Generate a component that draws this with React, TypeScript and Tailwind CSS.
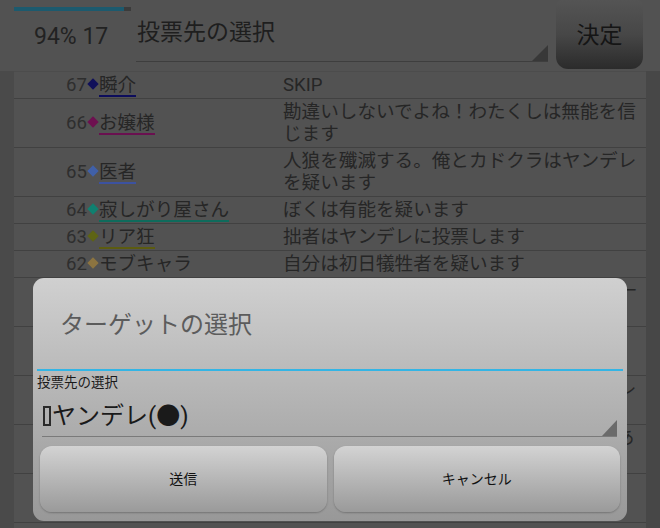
import React from "react";

const font = { fontFamily: "Roboto, 'Noto Sans CJK JP', sans-serif" };

type Row = { n: number; name: string; color: string | null; dia: string; text: string };

const rows: Row[] = [
  { n: 67, name: "瞬介", color: "#0d0d5c", dia: "#10105a", text: "SKIP" },
  { n: 66, name: "お嬢様", color: "#6a1050", dia: "#6e1050", text: "勘違いしないでよね！わたくしは無能を信じます" },
  { n: 65, name: "医者", color: "#3c52a0", dia: "#4060a8", text: "人狼を殲滅する。俺とカドクラはヤンデレを疑います" },
  { n: 64, name: "寂しがり屋さん", color: "#0f6b5c", dia: "#108070", text: "ぼくは有能を疑います" },
  { n: 63, name: "リア狂", color: "#5c5c10", dia: "#5e6414", text: "拙者はヤンデレに投票します" },
  { n: 62, name: "モブキャラ", color: null, dia: "#8c7440", text: "自分は初日犠牲者を疑います" },
  { n: 61, name: "カドクラ", color: "#5a2a10", dia: "#5a2a10", text: "医者とは意見が合わないがヤンデレには一票ー" },
  { n: 60, name: "ヤンデレ", color: "#601010", dia: "#601010", text: "みんなわたしのことを疑うのね。いいわ、わかったわ" },
  { n: 59, name: "無能", color: "#303060", dia: "#303060", text: "有能は怪しいと思いますがまずはヤンデレからです" },
  { n: 58, name: "有能", color: "#305030", dia: "#305030", text: "ぼくは無能が人狼だと思います。理由はあとで説明する｜" },
  { n: 57, name: "初日犠牲者", color: null, dia: "#707070", text: "疑われて困惑していますが、私は村人です。信じてください" },
];

function Diamond({ c }: { c: string }) {
  return <span className="inline-block w-[8px] h-[8px] rotate-45 mx-[2px] mb-[3px]" style={{ backgroundColor: c }} />;
}

export default function App() {
  return (
    <div className="relative w-[660px] h-[528px] overflow-hidden bg-[#525252] text-[#262626]" style={font}>
      {/* header */}
      <div className="flex h-[71px]">
        <div className="w-[136px] flex flex-col">
          <div className="ml-[14px] mt-[7px] w-[117px] h-[4px] bg-[#3b3b3b] flex">
            <div className="w-[110px] h-full bg-[#1c5a6e]" />
          </div>
          <div className="ml-[34px] mt-[12px] text-[23px] leading-[28px] text-[#222]">94% 17</div>
        </div>
        <div className="relative w-[412px] h-[62px] border-b border-[#3e3e3e]">
          <div className="pt-[18px] pl-[1px] text-[23px] leading-[30px] text-[#1e1e1e]">投票先の選択</div>
          <div className="absolute right-0 bottom-0 w-[16px] h-[16px] bg-[#383838] [clip-path:polygon(100%_0,100%_100%,0_100%)]" />
        </div>
        <div className="ml-[8px] w-[87px] h-[69px] rounded-b-[12px] rounded-t-[6px] bg-linear-to-b from-[#545454] via-[#474747] to-[#2b2b2b] flex items-center justify-center text-[23px] text-[#151515] pt-[4px]">
          決定
        </div>
      </div>

      {/* body */}
      <div className="flex h-[457px]">
        <div className="w-[14px] bg-[#4a4a4a]" />
        <div className="flex-1 border-t border-[#4c4c4c]">
          {rows.map((r) => (
            <div key={r.n} className="grid grid-cols-[269px_1fr] border-b border-[#414141] text-[18.6px] leading-[22px]">
              <div className="pl-[52px] flex items-center whitespace-nowrap">
                <span className="text-[#2e2e2e]">{r.n}</span>
                <Diamond c={r.dia} />
                {r.color ? (
                  <span className="inline-block leading-[20px] border-b-2 mt-[2px]" style={{ borderColor: r.color }}>
                    {r.name}
                  </span>
                ) : (
                  <span>{r.name}</span>
                )}
              </div>
              <div className="py-[2px] pr-[6px]">{r.text}</div>
            </div>
          ))}
        </div>
        <div className="w-[14px] bg-[#474747]" />
      </div>

      {/* dialog */}
      <div className="absolute left-[33px] top-[278px] w-[594px] h-[243px] rounded-[11px] bg-linear-to-b from-[#d0d0d0] to-[#989898] flex flex-col">
        <div className="h-[91px] flex items-center pl-[27px] pt-[3px] text-[24px] text-[#5c5c5c]">ターゲットの選択</div>
        <div className="mx-[4px] h-[2px] bg-[#33b5e5]" />
        <div className="px-[4px] mt-[1px] text-[13.5px] leading-[20px] text-[#1a1a1a]">投票先の選択</div>
        <div className="relative ml-[9px] mr-[10px] h-[45px] border-b border-[#7a7a7a] pt-[8px]">
          <div className="flex items-center text-[24px] leading-[32px] text-[#1a1a1a]">
            <span className="inline-block w-[8px] h-[20px] border-2 border-[#2a2a2a] ml-[1px] mr-[1px]" />
            ヤンデレ(●)
          </div>
          <div className="absolute right-0 bottom-0 w-[15px] h-[16px] bg-[#6a6a6a] [clip-path:polygon(100%_0,100%_100%,0_100%)]" />
        </div>
        <div className="mt-[9px] px-[7px] flex gap-[7px]">
          <div className="flex-1 h-[66px] rounded-[12px] bg-linear-to-b from-[#d3d3d3] to-[#9a9a9a] shadow-[0_1px_2px_rgba(0,0,0,0.25)] flex items-center justify-center text-[14px] text-[#111]">
            送信
          </div>
          <div className="flex-1 h-[66px] rounded-[12px] bg-linear-to-b from-[#d3d3d3] to-[#9a9a9a] shadow-[0_1px_2px_rgba(0,0,0,0.25)] flex items-center justify-center text-[14px] text-[#111]">
            キャンセル
          </div>
        </div>
      </div>
    </div>
  );
}
